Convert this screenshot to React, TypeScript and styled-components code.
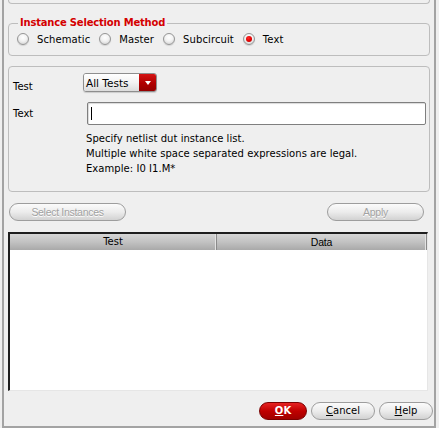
import styled, { createGlobalStyle } from 'styled-components'

const GlobalStyle = createGlobalStyle`
  html, body {
    margin: 0;
    padding: 0;
    background: #efefef;
  }
  body {
    font-family: 'DejaVu Sans', sans-serif;
    font-size: 10px;
    color: #000000;
  }
`

const Frame = styled.div`
  box-sizing: border-box;
  width: 434px;
  height: 428px;
  margin-left: 2px;
  padding: 0 4px;
  display: flex;
  flex-direction: column;
  border-left: 2px solid #a3a3a3;
  border-right: 2px solid #a3a3a3;
  border-bottom: 2px solid #a3a3a3;
  background: #efefef;
`

const TopStub = styled.div`
  box-sizing: border-box;
  height: 4px;
  border: 1px solid #bdbdbd;
  border-top: none;
  border-radius: 0 0 4px 4px;
`

const GroupBox = styled.fieldset`
  box-sizing: border-box;
  margin: 13px 0 0;
  padding: 3px 8px 9px;
  min-width: 0;
  border: 1px solid #bdbdbd;
  border-radius: 4px;
`

const Legend = styled.legend`
  margin-left: 1px;
  padding: 0 2px;
  line-height: 12px;
  font-weight: bold;
  letter-spacing: -0.2px;
  color: #d40000;
`

const RadioRow = styled.div`
  display: flex;
  align-items: center;
  height: 14px;
`

const RadioItem = styled.label`
  display: flex;
  align-items: center;
  gap: 8px;
  margin-right: 9px;
  letter-spacing: 0.1px;
`

const RadioDot = styled.span<{ $checked?: boolean }>`
  box-sizing: border-box;
  width: 12px;
  height: 12px;
  border-radius: 50%;
  border: 1px solid #959595;
  background: radial-gradient(circle at 50% 35%, #ffffff 0%, #f2f2f2 45%, #c9c9c9 100%);
  box-shadow: 0 1px 1px rgba(0, 0, 0, 0.12);
  display: grid;
  place-items: center;

  &::after {
    content: '';
    display: ${({ $checked }) => ($checked ? 'block' : 'none')};
    width: 6px;
    height: 6px;
    border-radius: 50%;
    background: radial-gradient(circle at 40% 35%, #ff2a2a 0%, #e00000 55%, #a00000 100%);
  }
`

const Panel = styled.div`
  box-sizing: border-box;
  margin-top: 10px;
  height: 126px;
  padding: 6px 3px 0 4px;
  border: 1px solid #bdbdbd;
  border-radius: 4px;
  display: grid;
  grid-template-columns: 70px 1fr;
  grid-template-rows: 19px 23px auto;
  row-gap: 10px;
`

const FieldLabel = styled.span<{ $offset: number }>`
  padding-top: ${({ $offset }) => $offset}px;
  line-height: 12px;
`

const Select = styled.div`
  box-sizing: border-box;
  width: 74px;
  height: 19px;
  display: flex;
  border: 1px solid #8e8e8e;
  border-radius: 3px;
  overflow: hidden;
  box-shadow: 0 1px 1px rgba(0, 0, 0, 0.15);
`

const SelectValue = styled.span`
  flex: 1;
  padding-left: 2px;
  display: flex;
  align-items: center;
  font-size: 10.5px;
  background: linear-gradient(#ffffff, #f3f3f3 50%, #dcdcdc);
`

const SelectArrow = styled.span`
  width: 17px;
  display: grid;
  place-items: center;
  background: linear-gradient(#d41414, #b00000 55%, #950000);

  &::after {
    content: '';
    width: 0;
    height: 0;
    border-left: 3.5px solid transparent;
    border-right: 3.5px solid transparent;
    border-top: 4px solid #ffffff;
  }
`

const TextField = styled.div`
  box-sizing: border-box;
  margin-left: 4px;
  height: 23px;
  padding-left: 3px;
  display: flex;
  align-items: center;
  background: #ffffff;
  border: 1px solid #7f7f7f;
  border-radius: 2px;
  box-shadow: inset 1px 1px 1px rgba(0, 0, 0, 0.15);
`

const Caret = styled.span`
  width: 1px;
  height: 13px;
  background: #000000;
`

const HelpText = styled.div`
  grid-column: 2;
  margin: -4px 0 0 3px;
  line-height: 15px;
  letter-spacing: 0.05px;
`

const ActionRow = styled.div<{ $end?: boolean }>`
  display: flex;
  justify-content: ${({ $end }) => ($end ? 'flex-end' : 'space-between')};
  gap: 4px;
  margin-top: 11px;
  padding: ${({ $end }) => ($end ? '0' : '0 6px 0 1px')};
  margin-right: ${({ $end }) => ($end ? '-3px' : '0')};
`

const PillButton = styled.button<{ $width: number; $tone?: 'primary' | 'disabled' }>`
  box-sizing: border-box;
  width: ${({ $width }) => $width}px;
  height: 18px;
  padding: 0;
  border-radius: 9px;
  border: 1px solid ${({ $tone }) => ($tone === 'primary' ? '#7a0000' : '#9d9d9d')};
  background: ${({ $tone }) =>
    $tone === 'primary'
      ? 'linear-gradient(#e62222, #c00000 50%, #a00000)'
      : 'linear-gradient(#fbfbfb, #ececec 50%, #d2d2d2)'};
  color: ${({ $tone }) => ($tone === 'primary' ? '#ffffff' : $tone === 'disabled' ? '#a2a2a2' : '#000000')};
  font-family: ${({ $tone }) =>
    $tone === 'disabled' ? "'Liberation Sans', Arial, sans-serif" : "'DejaVu Sans', sans-serif"};
  font-size: ${({ $tone }) => ($tone === 'disabled' ? '10.5px' : '10px')};
  font-weight: ${({ $tone }) => ($tone === 'primary' ? 'bold' : 'normal')};
  letter-spacing: ${({ $tone }) => ($tone === 'disabled' ? '-0.3px' : '0')};
  text-shadow: ${({ $tone }) => ($tone === 'disabled' ? '0 1px 0 #ffffff' : 'none')};
  line-height: 16px;

  u {
    text-underline-offset: 1px;
  }
`

const Table = styled.div`
  box-sizing: border-box;
  margin: 11px 2px 0 0;
  height: 159px;
  display: flex;
  flex-direction: column;
  background: #ffffff;
  border-top: 2px solid #1e1e1e;
  border-left: 2px solid #1e1e1e;
  border-right: 1px solid #e6e6e6;
  border-bottom: 1px solid #e6e6e6;
`

const HeaderRow = styled.div`
  display: grid;
  grid-template-columns: 207px 1fr;
  height: 16px;
`

const HeaderCell = styled.div<{ $narrow?: boolean }>`
  display: grid;
  place-items: center;
  background: linear-gradient(#d6d6d6, #c2c2c2 50%, #a9a9a9);
  border-right: 1px solid #8a8a8a;
  box-shadow: inset -1px 0 0 #e2e2e2;
  font-family: ${({ $narrow }) => ($narrow ? "'Liberation Sans', Arial, sans-serif" : "'DejaVu Sans', sans-serif")};
  font-size: ${({ $narrow }) => ($narrow ? '10.5px' : '10px')};
  letter-spacing: ${({ $narrow }) => ($narrow ? '-0.2px' : '0')};
  line-height: 16px;
`

export default function App() {
  return (
    <>
      <GlobalStyle />
      <Frame>
        <TopStub />

        <GroupBox>
          <Legend>Instance Selection Method</Legend>
          <RadioRow>
            <RadioItem>
              <RadioDot />
              Schematic
            </RadioItem>
            <RadioItem>
              <RadioDot />
              Master
            </RadioItem>
            <RadioItem>
              <RadioDot />
              Subcircuit
            </RadioItem>
            <RadioItem>
              <RadioDot $checked />
              Text
            </RadioItem>
          </RadioRow>
        </GroupBox>

        <Panel>
          <FieldLabel $offset={8}>Test</FieldLabel>
          <Select>
            <SelectValue>All Tests</SelectValue>
            <SelectArrow />
          </Select>
          <FieldLabel $offset={6}>Text</FieldLabel>
          <TextField>
            <Caret />
          </TextField>
          <HelpText>
            Specify netlist dut instance list.
            <br />
            Multiple white space separated expressions are legal.
            <br />
            Example: I0 I1.M*
          </HelpText>
        </Panel>

        <ActionRow>
          <PillButton type="button" $width={117} $tone="disabled" disabled>
            Select Instances
          </PillButton>
          <PillButton type="button" $width={97} $tone="disabled" disabled>
            Apply
          </PillButton>
        </ActionRow>

        <Table>
          <HeaderRow>
            <HeaderCell>Test</HeaderCell>
            <HeaderCell $narrow>Data</HeaderCell>
          </HeaderRow>
        </Table>

        <ActionRow $end>
          <PillButton type="button" $width={48} $tone="primary">
            <u>O</u>K
          </PillButton>
          <PillButton type="button" $width={64}>
            <u>C</u>ancel
          </PillButton>
          <PillButton type="button" $width={54}>
            <u>H</u>elp
          </PillButton>
        </ActionRow>
      </Frame>
    </>
  )
}
